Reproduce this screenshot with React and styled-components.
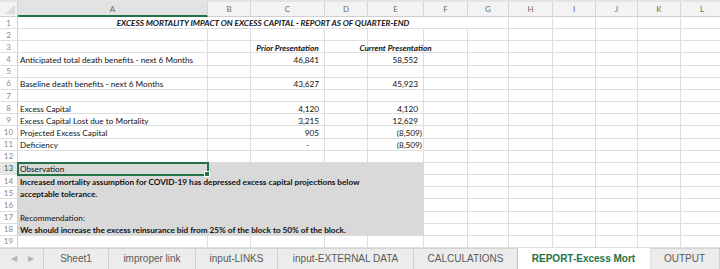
import React from 'react'
import styled, { createGlobalStyle } from 'styled-components'

const GlobalStyle = createGlobalStyle`
  html, body {
    margin: 0;
    padding: 0;
    background: #ffffff;
  }
  body {
    width: 720px;
    height: 269px;
    overflow: hidden;
    font-family: 'Lato', 'Liberation Sans', sans-serif;
  }
`

const COLS = ['A', 'B', 'C', 'D', 'E', 'F', 'G', 'H', 'I', 'J', 'K', 'L']
const WIDTHS = [190, 43, 74, 43, 56, 44, 41, 44, 43, 42, 43, 43]
const ROW_COUNT = 19

const Page = styled.div`
  width: 720px;
  height: 269px;
  display: flex;
  flex-direction: column;
  overflow: hidden;
`

const Sheet = styled.div`
  display: grid;
  grid-template-columns: 18px ${WIDTHS.map((w) => `${w}px`).join(' ')};
  grid-template-rows: 17px repeat(${ROW_COUNT}, 12.16px);
  width: 724px;
  flex: none;
`

const Corner = styled.div`
  background: #f3f3f3;
  border-top: 2px solid #e4e4e4;
  border-right: 1px solid #cfcfcf;
  border-bottom: 1px solid #cfcfcf;
  position: relative;
  &::after {
    content: '';
    position: absolute;
    right: 2px;
    bottom: 2px;
    border-left: 10px solid transparent;
    border-bottom: 9px solid #dcdcdc;
  }
`

const ColHead = styled.div`
  display: flex;
  align-items: center;
  justify-content: center;
  background: ${(p) => (p.$active ? '#e2e2e2' : '#f3f3f3')};
  border-top: 2px solid #e4e4e4;
  border-right: 1px solid #d6d6d6;
  border-bottom: ${(p) => (p.$active ? '2px solid #217346' : '1px solid #cfcfcf')};
  color: #6b6b6b;
  font-size: 8px;
  box-sizing: border-box;
`

const RowHead = styled.div`
  display: flex;
  align-items: center;
  justify-content: center;
  background: ${(p) => (p.$active ? '#e6e6e6' : '#ffffff')};
  border-right: 1px solid #cfcfcf;
  border-bottom: 1px solid #dedede;
  color: ${(p) => (p.$active ? '#2f5f44' : '#8a8a8a')};
  font-size: 8px;
  box-sizing: border-box;
`

const Cell = styled.div`
  grid-column: span ${(p) => p.$span || 1};
  display: flex;
  align-items: center;
  justify-content: ${(p) =>
    p.$align === 'right' ? 'flex-end' : p.$align === 'center' ? 'center' : 'flex-start'};
  padding: 0 ${(p) => p.$padRight ?? 2}px 0 2px;
  background: ${(p) => (p.$fill ? '#d9d9d9' : 'transparent')};
  border-right: 1px solid ${(p) => (p.$fill ? '#d9d9d9' : '#dedede')};
  border-bottom: 1px solid ${(p) => (p.$fill && !p.$lastFill ? '#d9d9d9' : '#dedede')};
  box-sizing: border-box;
  position: relative;
  min-width: 0;
  color: #111111;
  font-size: 8.2px;
  font-weight: ${(p) => (p.$bold ? 700 : 400)};
  font-style: ${(p) => (p.$italic ? 'italic' : 'normal')};
  white-space: nowrap;
  line-height: 1;

  ${(p) =>
    p.$selected &&
    `
    outline: 2px solid #217346;
    outline-offset: -1px;
    z-index: 2;
    &::after {
      content: '';
      position: absolute;
      right: -3px;
      bottom: -3px;
      width: 4px;
      height: 4px;
      background: #217346;
      border: 1px solid #ffffff;
    }
  `}
`

const CellText = styled.span`
  display: block;
  transform: translateY(1px);
`

const TabBar = styled.div`
  flex: 1;
  display: flex;
  align-items: stretch;
  background: #ececec;
  border-top: 1px solid #d4d4d4;
  font-family: 'Liberation Sans', Arial, sans-serif;
  font-size: 10px;
`

const NavArrows = styled.div`
  width: 48px;
  display: flex;
  align-items: center;
  justify-content: center;
  gap: 11px;
  padding-left: 2px;
  box-sizing: border-box;
  border-right: 1px solid #d0d0d0;
  color: #b5b5b5;
  font-size: 8px;
`

const Tab = styled.div`
  width: ${(p) => p.$width}px;
  flex: none;
  display: flex;
  align-items: center;
  justify-content: center;
  box-sizing: border-box;
  border-right: 1px solid ${(p) => (p.$active ? 'transparent' : '#d0d0d0')};
  background: ${(p) => (p.$active ? '#ffffff' : 'transparent')};
  color: ${(p) => (p.$active ? '#217346' : '#5a5a5a')};
  font-weight: ${(p) => (p.$active ? 700 : 400)};
  margin-top: ${(p) => (p.$active ? '-1px' : '0')};
  box-shadow: ${(p) => (p.$active ? '0 1px 2px rgba(0,0,0,0.15)' : 'none')};
  white-space: nowrap;
`

const num = (text) => ({ text, align: 'right', padRight: text.startsWith('(') ? 1 : 5 })

const ROWS = {
  1: {
    A: {
      text: 'EXCESS MORTALITY IMPACT ON EXCESS CAPITAL - REPORT AS OF QUARTER-END',
      span: 7,
      align: 'center',
      bold: true,
      italic: true,
    },
  },
  3: {
    C: { text: 'Prior Presentation', align: 'center', bold: true, italic: true },
    E: { text: 'Current Presentation', align: 'center', bold: true, italic: true },
  },
  4: {
    A: { text: 'Anticipated total death benefits - next 6 Months' },
    C: num('46,841'),
    E: num('58,552'),
  },
  6: {
    A: { text: 'Baseline death benefits - next 6 Months' },
    C: num('43,627'),
    E: num('45,923'),
  },
  8: { A: { text: 'Excess Capital' }, C: num('4,120'), E: num('4,120') },
  9: { A: { text: 'Excess Capital Lost due to Mortality' }, C: num('3,215'), E: num('12,629') },
  10: { A: { text: 'Projected Excess Capital' }, C: num('905'), E: num('(8,509)') },
  11: {
    A: { text: 'Deficiency' },
    C: { text: '-', align: 'right', padRight: 15 },
    E: num('(8,509)'),
  },
  13: { A: { text: 'Observation', selected: true } },
  14: {
    A: {
      text: 'Increased mortality assumption for COVID-19 has depressed excess capital projections below',
      span: 5,
      bold: true,
    },
  },
  15: { A: { text: 'acceptable tolerance.', span: 5, bold: true } },
  17: { A: { text: 'Recommendation:' } },
  18: {
    A: {
      text: 'We should increase the excess reinsurance bid from 25% of the block to 50% of the block.',
      span: 5,
      bold: true,
    },
  },
}

const FILL_FROM = 13
const FILL_TO = 18
const FILL_COLS = 5

const TABS = [
  { name: 'Sheet1', width: 65 },
  { name: 'improper link', width: 87 },
  { name: 'input-LINKS', width: 82 },
  { name: 'input-EXTERNAL DATA', width: 136 },
  { name: 'CALCULATIONS', width: 104 },
  { name: 'REPORT-Excess Mort', width: 132, active: true },
  { name: 'OUTPUT', width: 70 },
]

function renderRow(r) {
  const defs = ROWS[r] || {}
  const cells = []
  let c = 0
  while (c < COLS.length) {
    const def = defs[COLS[c]] || {}
    const span = def.span || 1
    const filled = r >= FILL_FROM && r <= FILL_TO && c < FILL_COLS
    cells.push(
      <Cell
        key={`${r}-${COLS[c]}`}
        $span={span}
        $align={def.align}
        $bold={def.bold}
        $italic={def.italic}
        $padRight={def.padRight}
        $fill={filled}
        $lastFill={r === FILL_TO}
        $selected={def.selected}
      >
        {def.text && <CellText>{def.text}</CellText>}
      </Cell>
    )
    c += span
  }
  return cells
}

export default function App() {
  const rowNumbers = Array.from({ length: ROW_COUNT }, (_, i) => i + 1)

  return (
    <Page>
      <GlobalStyle />
      <Sheet>
        <Corner />
        {COLS.map((col) => (
          <ColHead key={col} $active={col === 'A'}>
            {col}
          </ColHead>
        ))}
        {rowNumbers.map((r) => (
          <React.Fragment key={r}>
            <RowHead $active={r === 13}>{r}</RowHead>
            {renderRow(r)}
          </React.Fragment>
        ))}
      </Sheet>
      <TabBar>
        <NavArrows>
          <span>◀</span>
          <span>▶</span>
        </NavArrows>
        {TABS.map((tab) => (
          <Tab key={tab.name} $width={tab.width} $active={tab.active}>
            {tab.name}
          </Tab>
        ))}
      </TabBar>
    </Page>
  )
}
